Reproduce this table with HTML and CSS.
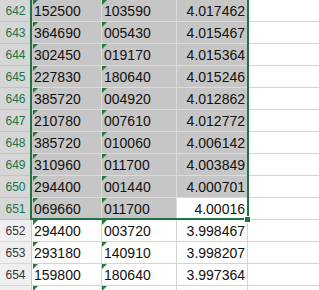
FILE: index.html
```html
<!DOCTYPE html>
<html>
<head>
<meta charset="utf-8">
<link rel="stylesheet" href="styles.css">
</head>
<body>
<div class="sheet">
  <div class="row sel"><div class="hd">642</div><div class="c a tri">152500</div><div class="c b tri">103590</div><div class="c n">4.017462</div><div class="c e"></div></div>
  <div class="row sel"><div class="hd">643</div><div class="c a tri">364690</div><div class="c b tri">005430</div><div class="c n">4.015467</div><div class="c e"></div></div>
  <div class="row sel"><div class="hd">644</div><div class="c a tri">302450</div><div class="c b tri">019170</div><div class="c n">4.015364</div><div class="c e"></div></div>
  <div class="row sel"><div class="hd">645</div><div class="c a tri">227830</div><div class="c b tri">180640</div><div class="c n">4.015246</div><div class="c e"></div></div>
  <div class="row sel"><div class="hd">646</div><div class="c a tri">385720</div><div class="c b tri">004920</div><div class="c n">4.012862</div><div class="c e"></div></div>
  <div class="row sel"><div class="hd">647</div><div class="c a tri">210780</div><div class="c b tri">007610</div><div class="c n">4.012772</div><div class="c e"></div></div>
  <div class="row sel"><div class="hd">648</div><div class="c a tri">385720</div><div class="c b tri">010060</div><div class="c n">4.006142</div><div class="c e"></div></div>
  <div class="row sel"><div class="hd">649</div><div class="c a tri">310960</div><div class="c b tri">011700</div><div class="c n">4.003849</div><div class="c e"></div></div>
  <div class="row sel"><div class="hd">650</div><div class="c a tri">294400</div><div class="c b tri">001440</div><div class="c n">4.000701</div><div class="c e"></div></div>
  <div class="row sel"><div class="hd">651</div><div class="c a tri">069660</div><div class="c b tri">011700</div><div class="c n active">4.00016</div><div class="c e"></div></div>
  <div class="row"><div class="hd">652</div><div class="c a tri">294400</div><div class="c b tri">003720</div><div class="c n">3.998467</div><div class="c e"></div></div>
  <div class="row"><div class="hd">653</div><div class="c a tri">293180</div><div class="c b tri">140910</div><div class="c n">3.998207</div><div class="c e"></div></div>
  <div class="row"><div class="hd">654</div><div class="c a tri">159800</div><div class="c b tri">180640</div><div class="c n">3.997364</div><div class="c e"></div></div>
  <div class="row"><div class="hd"></div><div class="c a tri"></div><div class="c b tri"></div><div class="c n"></div><div class="c e"></div></div>
  <div class="selection"></div>
  <div class="handle"></div>
</div>
</body>
</html>
```
FILE: styles.css
```css
html, body {
  margin: 0;
  padding: 0;
  background: #ffffff;
  overflow: hidden;
}
.sheet {
  position: relative;
  width: 319px;
  height: 290px;
  overflow: hidden;
  font-family: "Liberation Sans", Arial, sans-serif;
  color: #111111;
}
.row {
  display: grid;
  grid-template-columns: 32px 70px 75px 71px 1fr;
  height: 22px;
}
.hd {
  box-sizing: border-box;
  background: #efefef;
  border-right: 1px solid #c8c8c8;
  border-bottom: 1px solid #d8d8d8;
  font-size: 12px;
  line-height: 19px;
  padding-top: 2px;
  text-align: center;
  color: #333333;
}
.sel .hd {
  background: #d6d6d6;
  color: #217346;
  border-bottom-color: #c4c4c4;
}
.c {
  box-sizing: border-box;
  position: relative;
  border-right: 1px solid #d4d4d4;
  border-bottom: 1px solid #d4d4d4;
  font-size: 14px;
  line-height: 19px;
  padding-top: 2px;
  white-space: nowrap;
}
.sel .c {
  background: #c6c6c6;
  border-color: #dcdcdc;
}
.sel .c.e {
  background: #ffffff;
  border-color: #d4d4d4;
}
.a, .b {
  padding-left: 2px;
}
.n {
  text-align: right;
  padding-right: 2px;
}
.sel .c.active {
  background: #ffffff;
}
.e {
  border-right: none;
}
.tri::before {
  content: "";
  position: absolute;
  left: 0;
  top: 0;
  border-top: 5px solid #247a3f;
  border-right: 5px solid transparent;
}
.a.tri::before {
  left: 1px;
}
.selection {
  position: absolute;
  left: 30px;
  top: -10px;
  width: 219px;
  height: 230px;
  box-sizing: border-box;
  border: 2px solid #217346;
}
.handle {
  position: absolute;
  left: 244px;
  top: 216px;
  width: 5px;
  height: 5px;
  background: #217346;
  border: 1px solid #ffffff;
}
```
